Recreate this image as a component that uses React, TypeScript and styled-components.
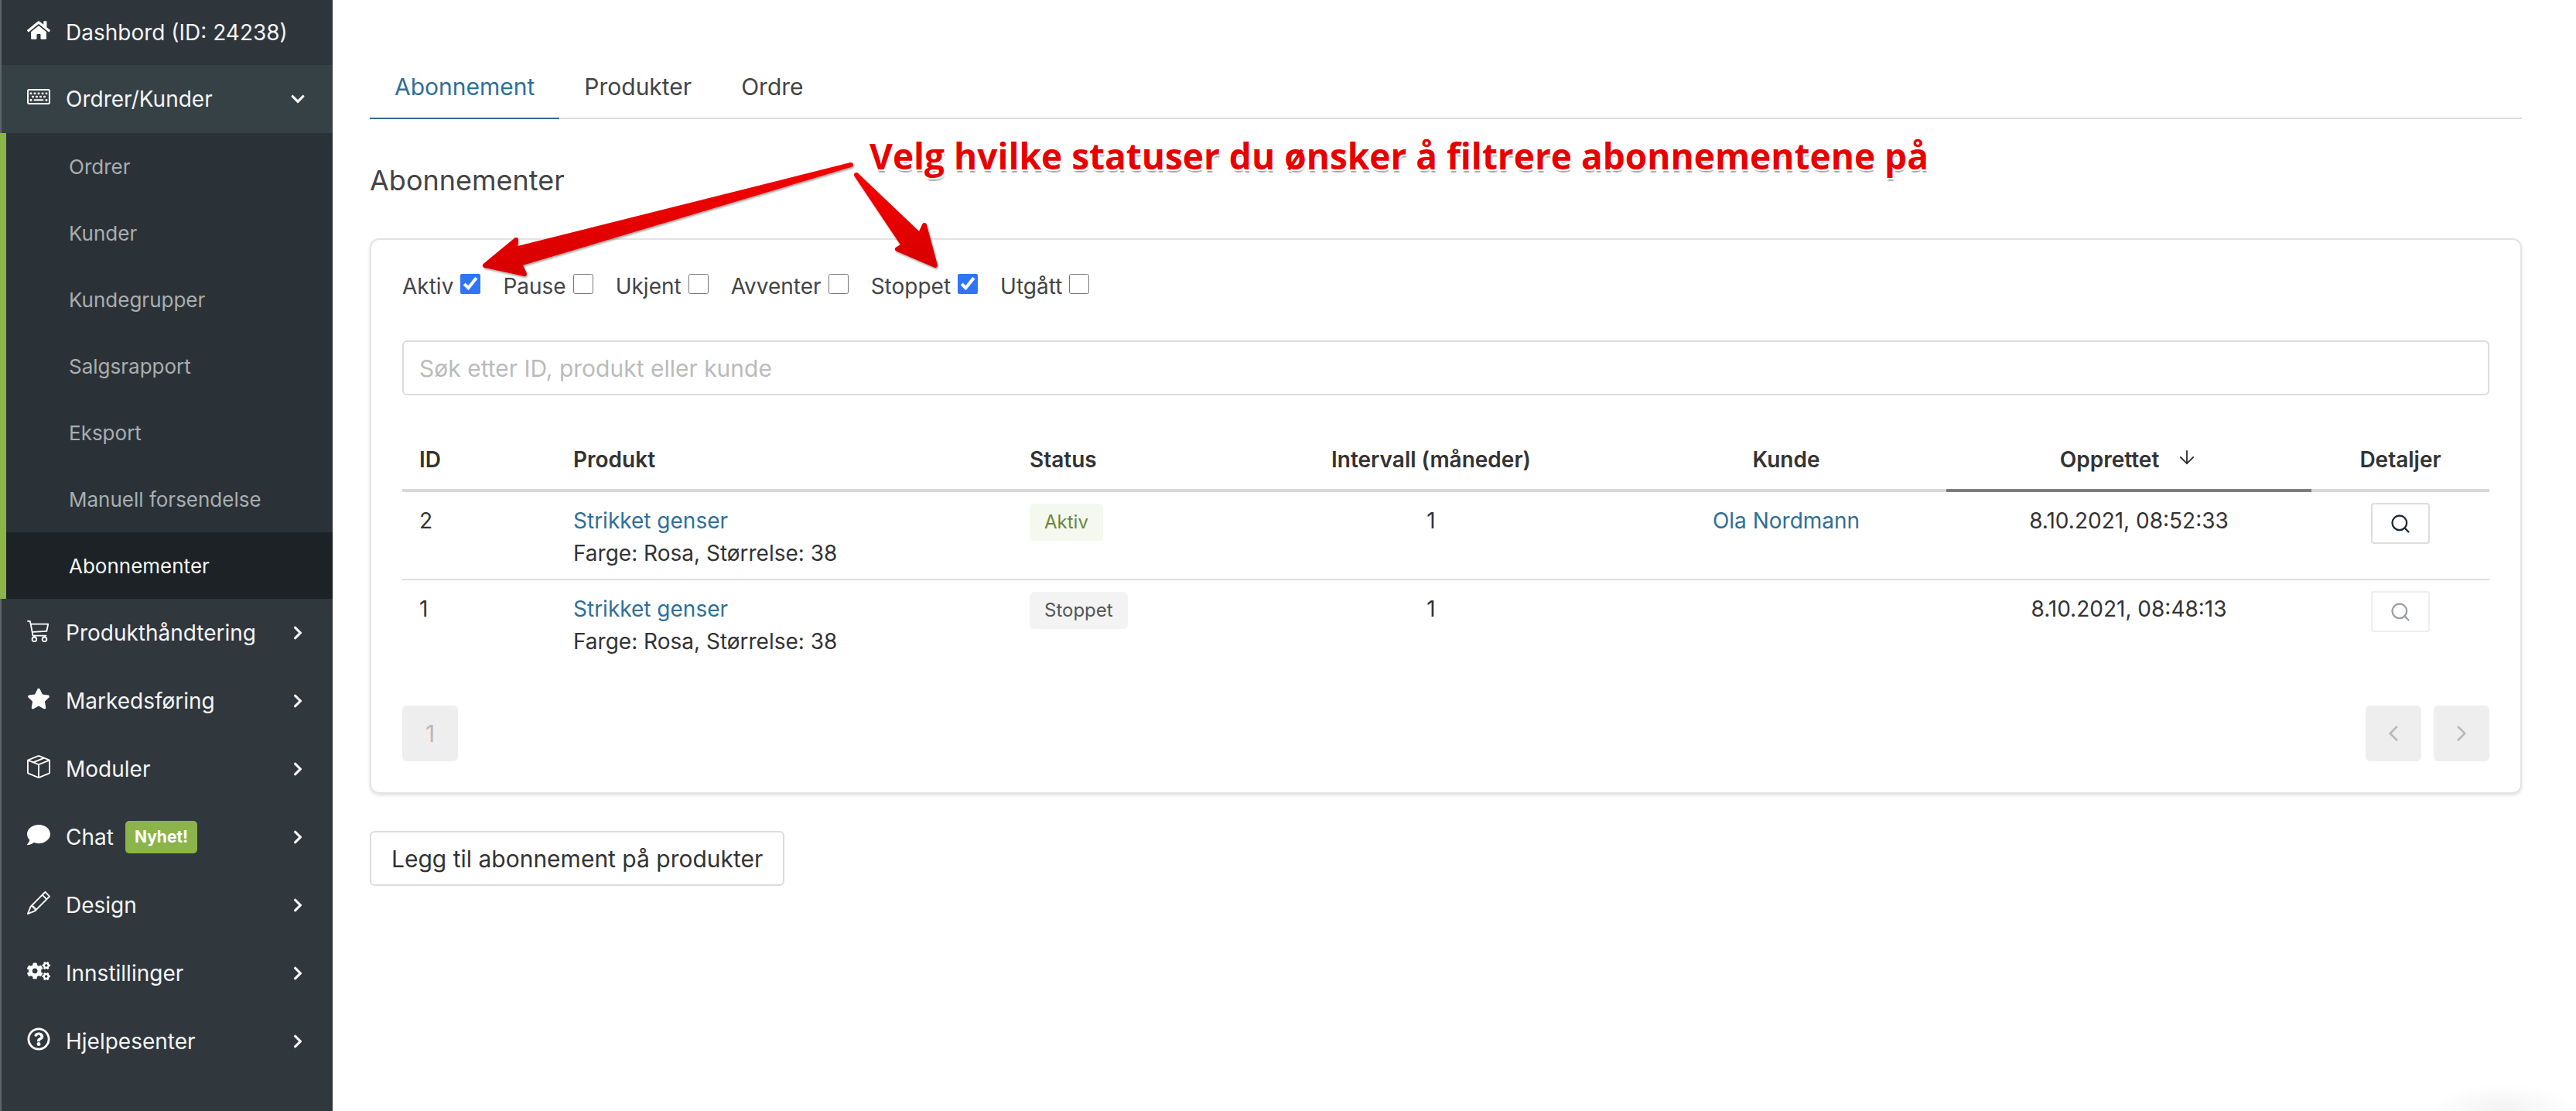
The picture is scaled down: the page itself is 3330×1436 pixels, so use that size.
import { createGlobalStyle, styled } from 'styled-components';
import {
  FaChevronDown,
  FaChevronRight,
  FaComment,
  FaCogs,
  FaHome,
  FaRegKeyboard,
  FaRegQuestionCircle,
  FaStar,
} from 'react-icons/fa';
import { BsBoxSeam, BsCart3, BsPencil } from 'react-icons/bs';
import { ArrowDown, ChevronLeft, ChevronRight, Search } from 'lucide-react';
import type { ReactNode } from 'react';

const GlobalStyle = createGlobalStyle`
  html, body {
    margin: 0;
    padding: 0;
    background: #fff;
  }
  body {
    font-family: Inter, "Liberation Sans", sans-serif;
    color: #333;
  }
`;

const Page = styled.div`
  position: relative;
  display: flex;
  width: 3330px;
  height: 1436px;
  overflow: hidden;
`;

const Sidebar = styled.nav`
  width: 430px;
  flex: none;
  box-sizing: border-box;
  background: #30373d;
  border-left: 2px solid #5c666a;
`;

const MenuRow = styled.div<{ $open?: boolean; $first?: boolean }>`
  display: flex;
  align-items: center;
  box-sizing: border-box;
  height: ${(p) => (p.$first ? '84px' : '88px')};
  padding: 0 35px 0 33px;
  background: ${(p) => (p.$open ? '#364146' : p.$first ? '#2e363b' : 'transparent')};
  color: #f4f5f5;
  font-size: 28px;
`;

const MenuIcon = styled.span`
  display: flex;
  justify-content: center;
  width: 30px;
  margin-right: 20px;
  margin-bottom: 6px;
  font-size: 30px;
  color: #fff;
`;

const MenuLabel = styled.span`
  flex: 1;
  display: flex;
  align-items: center;
`;

const NewBadge = styled.span`
  margin-left: 15px;
  padding: 0 12px;
  height: 42px;
  line-height: 42px;
  border-radius: 5px;
  background: #8bb54a;
  color: #fff;
  font-size: 21px;
  font-weight: 700;
`;

const SubMenu = styled.div`
  margin-left: -2px;
  border-left: 8px solid #8bb54a;
  background: #2b3237;
`;

const SubItem = styled.div<{ $active?: boolean }>`
  display: flex;
  align-items: center;
  height: 86px;
  padding-left: 81px;
  font-size: 26px;
  background: ${(p) => (p.$active ? '#1c2225' : 'transparent')};
  color: ${(p) => (p.$active ? '#f4f5f5' : '#a9aeb1')};
`;

const Main = styled.main`
  flex: 1;
  padding: 72px 70px 0 48px;
  min-width: 0;
`;

const Tabs = styled.div`
  display: flex;
  height: 82px;
  box-sizing: border-box;
  border-bottom: 2px solid #dcdcdc;
`;

const Tab = styled.div<{ $active?: boolean }>`
  display: flex;
  align-items: center;
  height: 82px;
  box-sizing: border-box;
  padding: 0 32px;
  font-size: 30px;
  color: ${(p) => (p.$active ? '#2f6f98' : '#444')};
  border-bottom: 2px solid ${(p) => (p.$active ? '#2f6f98' : 'transparent')};
`;

const Heading = styled.h2`
  margin: 54px 0 50px;
  font-size: 36px;
  line-height: 50px;
  font-weight: 400;
  color: #444;
`;

const Card = styled.section`
  box-sizing: border-box;
  height: 718px;
  padding: 38px 40px 0;
  border: 2px solid #e4e4e4;
  border-radius: 12px;
  box-shadow: 0 2px 4px rgba(0, 0, 0, 0.12);
`;

const Filters = styled.div`
  display: flex;
  align-items: center;
  height: 44px;
  gap: 29px;
`;

const FilterLabel = styled.label`
  display: flex;
  align-items: center;
  gap: 9px;
  font-size: 28px;
  color: #444;
`;

const FilterBox = styled.input`
  width: 26px;
  height: 26px;
  margin: 0 0 6px;
  accent-color: #2f75f6;
`;

const SearchInput = styled.input`
  display: block;
  box-sizing: border-box;
  width: 100%;
  height: 71px;
  margin-top: 48px;
  padding: 0 20px;
  border: 2px solid #dcdcdc;
  border-radius: 6px;
  font-family: inherit;
  font-size: 30px;
  outline: none;
  &::placeholder {
    color: #bbb;
  }
`;

const Table = styled.table`
  width: 100%;
  margin-top: 49px;
  table-layout: fixed;
  border-collapse: separate;
  border-spacing: 0;
`;

const HeadCell = styled.th<{ $center?: boolean; $sorted?: boolean }>`
  height: 76px;
  box-sizing: border-box;
  padding: 0 22px 4px;
  text-align: ${(p) => (p.$center ? 'center' : 'left')};
  font-size: 28px;
  font-weight: 600;
  color: #333;
  border-bottom: 4px solid ${(p) => (p.$sorted ? '#7d7d7d' : '#d8d8d8')};
`;

const SortArrow = styled(ArrowDown)`
  margin-left: 22px;
  vertical-align: -1px;
`;

const Cell = styled.td<{ $center?: boolean; $last?: boolean }>`
  vertical-align: top;
  box-sizing: border-box;
  height: 114px;
  padding: 16px 22px 0;
  line-height: 42px;
  text-align: ${(p) => (p.$center ? 'center' : 'left')};
  font-size: 28px;
  color: #333;
  border-bottom: ${(p) => (p.$last ? 'none' : '2px solid #dcdcdc')};
`;

const ItemLink = styled.a`
  display: block;
  color: #2f6f98;
`;

const StatusBadge = styled.span<{ $tone: 'green' | 'grey' }>`
  display: inline-block;
  margin-top: -2px;
  height: 48px;
  padding: 0 19px;
  line-height: 48px;
  border-radius: 6px;
  font-size: 24px;
  background: ${(p) => (p.$tone === 'green' ? '#f4f8ee' : '#f3f3f3')};
  color: ${(p) => (p.$tone === 'green' ? '#66883a' : '#555')};
`;

const DetailButton = styled.button<{ $disabled?: boolean }>`
  display: inline-flex;
  align-items: center;
  justify-content: center;
  width: 76px;
  height: 53px;
  margin-top: -2px;
  vertical-align: top;
  background: #fff;
  border: 2px solid ${(p) => (p.$disabled ? '#eee' : '#ddd')};
  border-radius: 4px;
  color: ${(p) => (p.$disabled ? '#9aa0a6' : '#1f2a33')};
`;

const Pagination = styled.div`
  display: flex;
  justify-content: space-between;
  margin-top: 48px;
`;

const PagerGroup = styled.div`
  display: flex;
  gap: 16px;
`;

const PagerButton = styled.div`
  display: flex;
  align-items: center;
  justify-content: center;
  width: 72px;
  height: 72px;
  border-radius: 6px;
  background: #eeeeee;
  color: #b8b8b8;
  font-size: 30px;
`;

const AddButton = styled.button`
  display: block;
  box-sizing: border-box;
  height: 71px;
  margin-top: 48px;
  padding: 0 26px;
  background: #fff;
  border: 2px solid #dcdcdc;
  border-radius: 6px;
  font-family: inherit;
  font-size: 30px;
  color: #333;
`;

const ArrowLayer = styled.svg`
  position: absolute;
  left: 0;
  top: 0;
  pointer-events: none;
`;

const Annotation = styled.div`
  position: absolute;
  left: 1124px;
  top: 170px;
  font-family: "Open Sans", sans-serif;
  font-size: 46px;
  line-height: 62px;
  font-weight: 700;
  white-space: nowrap;
  color: #e80000;
  text-shadow: 2px 0 0 #fff, -2px 0 0 #fff, 0 2px 0 #fff, 0 -2px 0 #fff, 2px 2px 0 #fff,
    -2px 2px 0 #fff, 2px -2px 0 #fff, -2px -2px 0 #fff, 1px 4px 1px #aaa;
`;

const CornerGlow = styled.div`
  position: absolute;
  left: 3140px;
  top: 1400px;
  width: 190px;
  height: 72px;
  border-radius: 50%;
  background: radial-gradient(closest-side, rgba(0, 0, 0, 0.05), rgba(0, 0, 0, 0));
`;

type MenuEntry = { icon: ReactNode; label: string; badge?: string };

const lowerMenu: MenuEntry[] = [
  { icon: <BsCart3 />, label: 'Produkthåndtering' },
  { icon: <FaStar />, label: 'Markedsføring' },
  { icon: <BsBoxSeam />, label: 'Moduler' },
  { icon: <FaComment />, label: 'Chat', badge: 'Nyhet!' },
  { icon: <BsPencil />, label: 'Design' },
  { icon: <FaCogs />, label: 'Innstillinger' },
  { icon: <FaRegQuestionCircle />, label: 'Hjelpesenter' },
];

const subItems = ['Ordrer', 'Kunder', 'Kundegrupper', 'Salgsrapport', 'Eksport', 'Manuell forsendelse', 'Abonnementer'];

const filters = [
  { label: 'Aktiv', checked: true },
  { label: 'Pause', checked: false },
  { label: 'Ukjent', checked: false },
  { label: 'Avventer', checked: false },
  { label: 'Stoppet', checked: true },
  { label: 'Utgått', checked: false },
];

const rows = [
  { id: 2, status: 'Aktiv', customer: 'Ola Nordmann', created: '8.10.2021, 08:52:33' },
  { id: 1, status: 'Stoppet', customer: '', created: '8.10.2021, 08:48:13' },
];

export default function App() {
  return (
    <Page>
      <GlobalStyle />
      <Sidebar>
        <MenuRow $first>
          <MenuIcon><FaHome /></MenuIcon>
          <MenuLabel>Dashbord (ID: 24238)</MenuLabel>
        </MenuRow>
        <MenuRow $open>
          <MenuIcon><FaRegKeyboard /></MenuIcon>
          <MenuLabel>Ordrer/Kunder</MenuLabel>
          <FaChevronDown size={20} />
        </MenuRow>
        <SubMenu>
          {subItems.map((item) => (
            <SubItem key={item} $active={item === 'Abonnementer'}>{item}</SubItem>
          ))}
        </SubMenu>
        {lowerMenu.map((entry) => (
          <MenuRow key={entry.label}>
            <MenuIcon>{entry.icon}</MenuIcon>
            <MenuLabel>
              {entry.label}
              {entry.badge && <NewBadge>{entry.badge}</NewBadge>}
            </MenuLabel>
            <FaChevronRight size={20} />
          </MenuRow>
        ))}
      </Sidebar>
      <Main>
        <Tabs>
          <Tab $active>Abonnement</Tab>
          <Tab>Produkter</Tab>
          <Tab>Ordre</Tab>
        </Tabs>
        <Heading>Abonnementer</Heading>
        <Card>
          <Filters>
            {filters.map((f) => (
              <FilterLabel key={f.label}>
                {f.label}
                <FilterBox type="checkbox" defaultChecked={f.checked} />
              </FilterLabel>
            ))}
          </Filters>
          <SearchInput placeholder="Søk etter ID, produkt eller kunde" />
          <Table>
            <colgroup>
              <col width="199" />
              <col width="590" />
              <col width="289" />
              <col width="504" />
              <col width="414" />
              <col width="472" />
              <col />
            </colgroup>
            <thead>
              <tr>
                <HeadCell>ID</HeadCell>
                <HeadCell>Produkt</HeadCell>
                <HeadCell>Status</HeadCell>
                <HeadCell $center>Intervall (måneder)</HeadCell>
                <HeadCell $center>Kunde</HeadCell>
                <HeadCell $center $sorted>
                  Opprettet
                  <SortArrow size={28} strokeWidth={1.6} />
                </HeadCell>
                <HeadCell $center>Detaljer</HeadCell>
              </tr>
            </thead>
            <tbody>
              {rows.map((row, i) => {
                const last = i === rows.length - 1;
                return (
                  <tr key={row.id}>
                    <Cell $last={last}>{row.id}</Cell>
                    <Cell $last={last}>
                      <ItemLink>Strikket genser</ItemLink>
                      Farge: Rosa, Størrelse: 38
                    </Cell>
                    <Cell $last={last}>
                      <StatusBadge $tone={row.status === 'Aktiv' ? 'green' : 'grey'}>{row.status}</StatusBadge>
                    </Cell>
                    <Cell $last={last} $center>1</Cell>
                    <Cell $last={last} $center>
                      <ItemLink>{row.customer}</ItemLink>
                    </Cell>
                    <Cell $last={last} $center>{row.created}</Cell>
                    <Cell $last={last} $center>
                      <DetailButton $disabled={row.status !== 'Aktiv'}>
                        <Search size={28} strokeWidth={2} />
                      </DetailButton>
                    </Cell>
                  </tr>
                );
              })}
            </tbody>
          </Table>
          <Pagination>
            <PagerButton>1</PagerButton>
            <PagerGroup>
              <PagerButton><ChevronLeft size={34} strokeWidth={1.8} /></PagerButton>
              <PagerButton><ChevronRight size={34} strokeWidth={1.8} /></PagerButton>
            </PagerGroup>
          </Pagination>
        </Card>
        <AddButton>Legg til abonnement på produkter</AddButton>
      </Main>
      <ArrowLayer width="3330" height="1436" viewBox="0 0 3330 1436">
        <defs>
          <linearGradient id="arrowFill" x1="0" y1="0" x2="0" y2="1">
            <stop offset="0" stopColor="#f40000" />
            <stop offset="1" stopColor="#d80000" />
          </linearGradient>
          <filter id="arrowShadow" x="-5%" y="-5%" width="110%" height="115%">
            <feDropShadow dx="1" dy="2" stdDeviation="1.2" floodColor="#000" floodOpacity="0.35" />
          </filter>
        </defs>
        <g fill="url(#arrowFill)" stroke="url(#arrowFill)" strokeWidth="6" strokeLinejoin="round" filter="url(#arrowShadow)">
          <path d="M1100 213 L666 322 L667 310 L627 343 L678 354 L672 341 Z" />
          <path d="M1107 226 L1189 304 L1195 291 L1209 343 L1160 322 L1168 317 Z" />
        </g>
      </ArrowLayer>
      <Annotation>Velg hvilke statuser du ønsker å filtrere abonnementene på</Annotation>
      <CornerGlow />
    </Page>
  );
}
